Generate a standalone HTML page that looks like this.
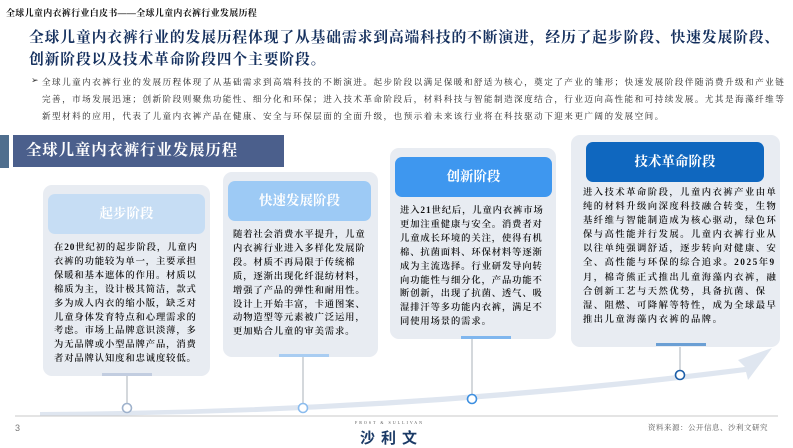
<!DOCTYPE html>
<html><head><meta charset="utf-8"><style>
*{margin:0;padding:0;box-sizing:border-box}
body{width:793px;height:446px;background:#fff;position:relative;overflow:hidden;font-family:"Liberation Serif","Noto Serif CJK SC",serif;color:#111}
.a{position:absolute}
.card{position:absolute;background:#e8ecf2;border-radius:9px}
.hd{position:absolute;border-radius:7px;color:#fff;font-weight:bold;text-align:center;font-family:"Liberation Sans","Noto Serif CJK SC",serif}
.tx{position:absolute;font-size:9.3px;line-height:13.9px;letter-spacing:0.9px;font-weight:600}
</style></head><body>
<div class="a" style="left:6px;top:6px;font-size:9px;font-weight:bold;letter-spacing:0.3px">全球儿童内衣裤行业白皮书——全球儿童内衣裤行业发展历程</div>
<div class="a" style="left:29px;top:27px;width:762px;font-size:14.8px;line-height:22px;font-weight:bold;color:#15305e;letter-spacing:0.85px">全球儿童内衣裤行业的发展历程体现了从基础需求到高端科技的不断演进，经历了起步阶段、快速发展阶段、创新阶段以及技术革命阶段四个主要阶段。</div>
<div class="a" style="left:31px;top:75px;font-size:9px;color:#333">➢</div>
<div class="a" style="left:42px;top:74px;width:745px;font-size:8.6px;line-height:17px;letter-spacing:1.45px;color:#222">全球儿童内衣裤行业的发展历程体现了从基础需求到高端科技的不断演进。起步阶段以满足保暖和舒适为核心，奠定了产业的雏形；快速发展阶段伴随消费升级和产业链完善，市场发展迅速；创新阶段则聚焦功能性、细分化和环保；进入技术革命阶段后，材料科技与智能制造深度结合，行业迈向高性能和可持续发展。尤其是海藻纤维等新型材料的应用，代表了儿童内衣裤产品在健康、安全与环保层面的全面升级，也预示着未来该行业将在科技驱动下迎来更广阔的发展空间。</div>
<div class="a" style="left:0;top:135px;width:9px;height:33px;background:#4f6e8e"></div>
<div class="a" style="left:13px;top:135px;width:271px;height:32px;background:#4b5f8c;color:#fff;font-size:15.5px;font-weight:bold;line-height:32px;padding-left:13px;letter-spacing:0.8px;font-family:'Liberation Sans','Noto Serif CJK SC',serif">全球儿童内衣裤行业发展历程</div>
<svg class="a" style="left:0;top:0" width="793" height="446">
<path d="M40 412 Q400 410 745 367 L738 360 L772 348 L748 380 L746 372 Q400 416 40 416Z" fill="#dfe6f0"/>
<g stroke="#a9b0b8" stroke-width="1"><line x1="127" y1="375" x2="127" y2="403"/><line x1="303" y1="356" x2="303" y2="403"/><line x1="472" y1="338" x2="472" y2="395"/><line x1="680" y1="346" x2="680" y2="371"/></g>
<g fill="#fff" stroke-width="1.6"><circle cx="127" cy="408" r="4.5" stroke="#9fb2cc"/><circle cx="303" cy="408" r="4.5" stroke="#8bbcee"/><circle cx="472" cy="399" r="4.5" stroke="#3d8fe0"/><circle cx="680" cy="375" r="4.5" stroke="#1c5ea8"/></g>
<line x1="15" y1="416" x2="778" y2="416" stroke="#c8c8c8"/>
</svg>
<div class="card" style="left:43px;top:185px;width:167px;height:191px"></div>
<div class="a" style="left:102px;top:373px;width:50px;height:3px;background:#c2cde0"></div>
<div class="hd" style="left:48px;top:194px;width:157px;height:40px;background:#c6ddf4;font-size:13.5px;line-height:40px">起步阶段</div>
<div class="tx" style="left:54px;top:242px;width:150px">在20世纪初的起步阶段，儿童内衣裤的功能较为单一，主要承担保暖和基本遮体的作用。材质以棉质为主，设计极其简洁，款式多为成人内衣的缩小版，缺乏对儿童身体发育特点和心理需求的考虑。市场上品牌意识淡薄，多为无品牌或小型品牌产品，消费者对品牌认知度和忠诚度较低。</div>
<div class="card" style="left:223px;top:172px;width:155px;height:185px"></div>
<div class="a" style="left:279px;top:354px;width:50px;height:3px;background:#a9cdf2"></div>
<div class="hd" style="left:228px;top:181px;width:143px;height:40px;background:#9dcaf5;font-size:13.5px;line-height:40px">快速发展阶段</div>
<div class="tx" style="left:233px;top:229px;width:142px">随着社会消费水平提升，儿童内衣裤行业进入多样化发展阶段。材质不再局限于传统棉质，逐渐出现化纤混纺材料，增强了产品的弹性和耐用性。设计上开始丰富，卡通图案、动物造型等元素被广泛运用，更加贴合儿童的审美需求。</div>
<div class="card" style="left:390px;top:148px;width:166px;height:191px"></div>
<div class="a" style="left:461px;top:336px;width:50px;height:3px;background:#7fb6ee"></div>
<div class="hd" style="left:395px;top:157px;width:157px;height:40px;background:#3e97ef;font-size:13.5px;line-height:40px">创新阶段</div>
<div class="tx" style="left:400px;top:205px;width:152px">进入21世纪后，儿童内衣裤市场更加注重健康与安全。消费者对儿童成长环境的关注，使得有机棉、抗菌面料、环保材料等逐渐成为主流选择。行业研发导向转向功能性与细分化，产品功能不断创新，出现了抗菌、透气、吸湿排汗等多功能内衣裤，满足不同使用场景的需求。</div>
<div class="card" style="left:571px;top:135px;width:209px;height:212px"></div>
<div class="a" style="left:656px;top:343px;width:50px;height:3px;background:#6b9fd4"></div>
<div class="hd" style="left:586px;top:142px;width:178px;height:40px;background:#0f67bf;font-size:13.5px;line-height:40px">技术革命阶段</div>
<div class="tx" style="left:583px;top:186px;width:195px;line-height:14.1px;letter-spacing:1.5px">进入技术革命阶段，儿童内衣裤产业由单纯的材料升级向深度科技融合转变，生物基纤维与智能制造成为核心驱动，绿色环保与高性能并行发展。儿童内衣裤行业从以往单纯强调舒适，逐步转向对健康、安全、高性能与环保的综合追求。2025年9月，棉奇熊正式推出儿童海藻内衣裤，融合创新工艺与天然优势，具备抗菌、保湿、阻燃、可降解等特性，成为全球最早推出儿童海藻内衣裤的品牌。</div>
<div class="a" style="left:15px;top:423px;font-size:9px;color:#777;font-family:'Liberation Sans',sans-serif">3</div>
<div class="a" style="left:355px;top:420px;font-size:4px;letter-spacing:2px;color:#555">FROST &amp; SULLIVAN</div>
<div class="a" style="left:360px;top:427px;font-size:15px;font-weight:bold;color:#1b3a66;letter-spacing:6px;font-family:'Liberation Sans','Noto Sans CJK SC',sans-serif">沙利文</div>
<div class="a" style="left:648px;top:422px;font-size:7.5px;color:#555;letter-spacing:0.5px">资料来源：公开信息、沙利文研究</div>
</body></html>
